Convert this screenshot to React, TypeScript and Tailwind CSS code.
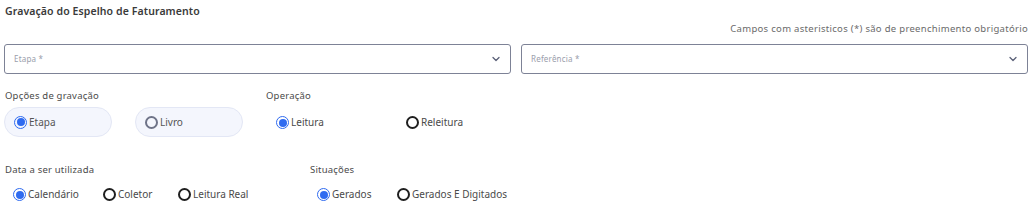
import React, { useState } from 'react';

const font = { fontFamily: '"Noto Sans", "Open Sans", sans-serif' };

const Chevron = () => (
  <svg width="10" height="10" viewBox="0 0 10 10" fill="none" className="text-[#5b6178]">
    <path d="M2 3.5 L5 6.5 L8 3.5" stroke="currentColor" strokeWidth="1.3" strokeLinecap="round" strokeLinejoin="round" />
  </svg>
);

const Radio: React.FC<{ checked: boolean; muted?: boolean }> = ({ checked, muted }) =>
  checked ? (
    <span className="w-[13px] h-[13px] rounded-full border-[1.5px] border-[#2f6bf0] flex items-center justify-center shrink-0">
      <span className="w-[8px] h-[8px] rounded-full bg-[#2f6bf0]" />
    </span>
  ) : (
    <span
      className={`w-[13px] h-[13px] rounded-full border-2 shrink-0 ${muted ? 'border-[#6e7388]' : 'border-[#1f1f1f]'}`}
    />
  );

const Select: React.FC<{ label: string }> = ({ label }) => (
  <div className="flex-1 h-[30px] border border-[#7d8296] rounded-[3px] flex items-center justify-between pl-[9px] pr-[9px] bg-white">
    <span className="text-[8px] text-[#9a9eab] tracking-[0.2px]">{label}</span>
    <Chevron />
  </div>
);

const Option: React.FC<{ label: string; checked: boolean; onClick: () => void; className?: string }> = ({
  label,
  checked,
  onClick,
  className,
}) => (
  <button onClick={onClick} className={`flex items-center gap-[2px] text-[10px] text-[#4a4a4a] ${className ?? ''}`}>
    <Radio checked={checked} />
    {label}
  </button>
);

export default function App() {
  const [gravacao, setGravacao] = useState('Etapa');
  const [operacao, setOperacao] = useState('Leitura');
  const [data, setData] = useState('Calendário');
  const [situacao, setSituacao] = useState('Gerados');

  return (
    <div className="w-[1032px] h-[205px] bg-white px-[4px] pt-[4px]" style={font}>
      <h1 className="text-[10.5px] font-semibold text-[#3a3a3a] leading-[14px] pl-[1px] tracking-[0.1px]">
        Gravação do Espelho de Faturamento
      </h1>
      <p className="text-[9.5px] text-[#6a6a6a] text-right leading-[12px] mt-[5px] tracking-[0.3px]">
        Campos com asteristicos (*) são de preenchimento obrigatório
      </p>
      <div className="flex gap-[10px] mt-[9px]">
        <Select label="Etapa *" />
        <Select label="Referência *" />
      </div>

      <div className="flex mt-[16px]">
        <div className="w-[262px]">
          <p className="text-[9.5px] text-[#4a4a4a] leading-[12px] pl-[1px] tracking-[0.2px]">Opções de gravação</p>
          <div className="flex gap-[23px] mt-[5px]">
            {['Etapa', 'Livro'].map((o) => (
              <button
                key={o}
                onClick={() => setGravacao(o)}
                className="w-[108px] h-[30px] rounded-full bg-[#f4f6fd] border border-[#e3e7f5] flex items-center gap-[2px] pl-[9px] text-[10px] text-[#555]"
              >
                <Radio checked={gravacao === o} muted />
                {o}
              </button>
            ))}
          </div>
        </div>
        <div>
          <p className="text-[9.5px] text-[#4a4a4a] leading-[12px] tracking-[0.2px]">Operação</p>
          <div className="flex mt-[13px] pl-[10px]">
            <Option label="Leitura" checked={operacao === 'Leitura'} onClick={() => setOperacao('Leitura')} className="w-[130px]" />
            <Option label="Releitura" checked={operacao === 'Releitura'} onClick={() => setOperacao('Releitura')} />
          </div>
        </div>
      </div>

      <div className="flex mt-[27px]">
        <div className="w-[306px]">
          <p className="text-[9.5px] text-[#4a4a4a] leading-[12px] pl-[1px] tracking-[0.2px]">Data a ser utilizada</p>
          <div className="flex mt-[11px] pl-[9px]">
            <Option label="Calendário" checked={data === 'Calendário'} onClick={() => setData('Calendário')} className="w-[90px]" />
            <Option label="Coletor" checked={data === 'Coletor'} onClick={() => setData('Coletor')} className="w-[75px]" />
            <Option label="Leitura Real" checked={data === 'Leitura Real'} onClick={() => setData('Leitura Real')} />
          </div>
        </div>
        <div>
          <p className="text-[9.5px] text-[#4a4a4a] leading-[12px] tracking-[0.2px]">Situações</p>
          <div className="flex mt-[11px] pl-[7px]">
            <Option label="Gerados" checked={situacao === 'Gerados'} onClick={() => setSituacao('Gerados')} className="w-[80px]" />
            <Option
              label="Gerados E Digitados"
              checked={situacao === 'Gerados E Digitados'}
              onClick={() => setSituacao('Gerados E Digitados')}
            />
          </div>
        </div>
      </div>
    </div>
  );
}
